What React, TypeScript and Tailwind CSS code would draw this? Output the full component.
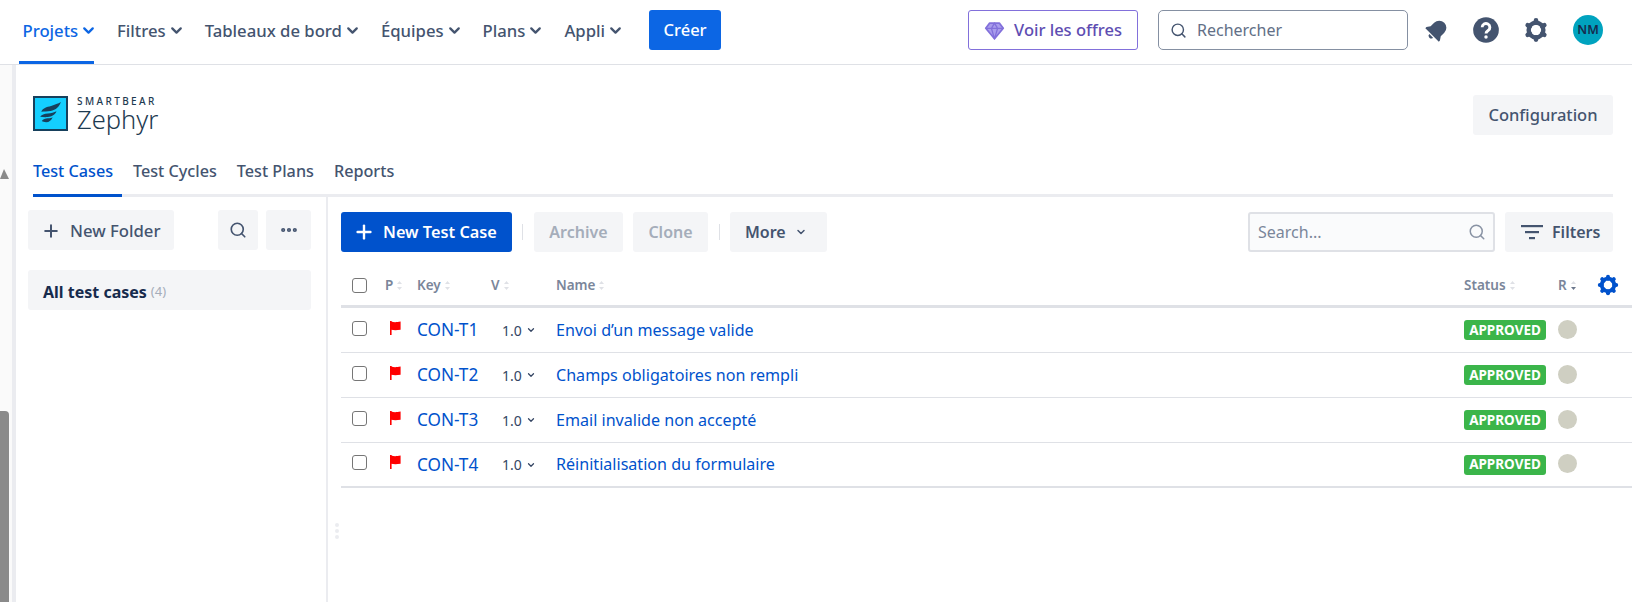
import { ChevronDown, Plus, Search, MoreHorizontal } from "lucide-react";

const FONT = "font-['Noto_Sans',sans-serif]";
const GRID = "grid grid-cols-[44px_32px_74px_65px_1fr_94px_74px] items-center";
const ROWS = [
  ["CON-T1", "Envoi d’un message valide"],
  ["CON-T2", "Champs obligatoires non rempli"],
  ["CON-T3", "Email invalide non accepté"],
  ["CON-T4", "Réinitialisation du formulaire"],
];

function NavItem({ label, active }: { label: string; active?: boolean }) {
  return (
    <div className={`flex h-full items-center text-[16.7px] font-medium border-b-[3px] ${active ? "w-[75px] border-b-[#0c66e4] pl-[3.5px] text-[#0c66e4]" : "ml-[20px] border-b-transparent text-[#44546f]"}`}>
      <span>{label}</span>
      <ChevronDown size={17} strokeWidth={3.2} className="ml-[2px] shrink-0" />
    </div>
  );
}

function Sort({ dark }: { dark?: boolean }) {
  return (
    <svg width="7" height="11" viewBox="0 0 7 11" className="ml-[3px]">
      <path d="M3.5 1 6 4H1z" fill="#dfe1e6" />
      <path d="M3.5 10 6 7H1z" fill={dark ? "#6b778c" : "#dfe1e6"} />
    </svg>
  );
}

function Head({ label, dark }: { label: string; dark?: boolean }) {
  return (
    <div className="flex items-center text-[13.5px] font-semibold text-[#7a869a]">
      <span>{label}</span>
      <Sort dark={dark} />
    </div>
  );
}

function Checkbox({ row }: { row?: boolean }) {
  return <div className={`ml-[11px] h-[15px] w-[15px] rounded-[3px] border-[1.5px] border-[#767676] bg-white ${row ? "mb-[4px]" : ""}`} />;
}

function Flag() {
  return (
    <svg width="12" height="15" viewBox="0 0 12 15" className="ml-[4px] mb-[4px]">
      <path d="M1 0h1.6v14H1z" fill="#ff0000" />
      <path d="M2 .6c3 .8 5 .8 9.6 0v8.2c-4 .6-6.6.6-9.6 0z" fill="#ff0000" />
    </svg>
  );
}

function Gear({ color, size, teeth = 6 }: { color: string; size: number; teeth?: number }) {
  const angles = Array.from({ length: teeth }, (_, i) => (i * 360) / teeth);
  return (
    <svg width={size} height={size} viewBox="0 0 24 24">
      {angles.map((a) => (
        <path key={a} d="M12 3.800v2" transform={`rotate(${a} 12 12)`} stroke={color} strokeWidth="4" strokeLinecap="round" />
      ))}
      <circle cx="12" cy="12" r="6.300" fill="none" stroke={color} strokeWidth="3.800" />
    </svg>
  );
}

function Nav() {
  return (
    <nav className="flex h-[65px] shrink-0 items-center border-b-[1.5px] border-[#dfe1e6] pl-[19px]">
      <div className="flex h-full items-center">
        <NavItem label="Projets" active />
        <div className="h-full pl-[3px]"><NavItem label="Filtres" /></div>
        <NavItem label="Tableaux de bord" />
        <NavItem label="Équipes" />
        <NavItem label="Plans" />
        <NavItem label="Appli" />
      </div>
      <button className="mb-[4px] ml-[25px] h-[40px] w-[72px] rounded-[3px] bg-[#0c66e4] text-[16.5px] font-medium text-white">Créer</button>
      <div className="mb-[4px] ml-auto flex items-center">
        <div className="flex h-[40px] w-[170px] items-center justify-center gap-[9px] rounded-[3px] border border-[#8270db] text-[16.5px] font-medium text-[#5e4db2]">
          <svg width="21" height="21" viewBox="0 0 24 24" fill="#a99cec" stroke="#8270db" strokeWidth="2" strokeLinejoin="round">
            <path d="M6.500 3.500h11L22 9.500 12 21.500 2 9.500z" />
            <path d="M2 9.500h20M8.500 9.500 12 21.500l3.500-12M8.500 9.500l3.500-6 3.500 6" strokeWidth="1.500" fill="none" />
          </svg>
          <span>Voir les offres</span>
        </div>
        <div className="ml-[20px] flex h-[40px] w-[250px] items-center gap-[10px] rounded-[5px] border border-[#8590a2] pl-[11px] text-[16px] text-[#626f86]">
          <Search size={17} strokeWidth={2} className="text-[#44546f]" />
          <span>Rechercher</span>
        </div>
        <div className="ml-[16px] flex w-[208px] items-center">
          <div className="flex w-[26px] justify-center">
            <svg width="26" height="26" viewBox="0 0 24 24" fill="#44546f">
              <g transform="rotate(45 12 12)">
                <path d="M12 2.500a6.600 6.600 0 0 0-6.600 6.600v4.600L3.200 17v1.400h17.600V17l-2.200-3.300V9.100A6.600 6.600 0 0 0 12 2.500z" />
                <path d="M9.600 19.600h4.800a2.400 2.400 0 0 1-4.800 0z" />
              </g>
            </svg>
          </div>
          <div className="ml-[22px] flex w-[28px] justify-center">
            <svg width="28" height="28" viewBox="0 0 24 24">
              <circle cx="12" cy="12" r="11" fill="#44546f" />
              <path d="M8.700 9.700a3.300 3.300 0 1 1 5.100 2.800c-1.200.8-1.800 1.300-1.800 2.500" fill="none" stroke="#fff" strokeWidth="2.500" />
              <circle cx="12" cy="18" r="1.500" fill="#fff" />
            </svg>
          </div>
          <div className="ml-[22px] flex w-[28px] justify-center"><Gear color="#44546f" size={28} /></div>
          <div className="ml-[23px] flex h-[30px] w-[30px] items-center justify-center rounded-full bg-[#00a3bf] text-[12.500px] font-semibold text-[#172b4d]">NM</div>
        </div>
      </div>
    </nav>
  );
}

function Logo() {
  return (
    <div className="flex items-center gap-[9px]">
      <div className="flex h-[35px] w-[35px] items-center justify-center border-2 border-[#17405c] bg-[#14cfff]">
        <svg width="25" height="25" viewBox="0 0 23 23" fill="#17405c">
          <path d="M3 10c1-3.500 5-4.500 9-5.500 3.500-1 6.500-2 9-3.500-1 4-4.500 7.500-9.500 8.300-3 .5-5.500.4-8.500.7z" />
          <path d="M2 14.500c1-2 4-2.700 7-3 3-.3 6-.8 8-2-1 3-4.500 5-8 5.300-2.800.2-5 0-7-.3z" />
          <path d="M3.500 18.500c1-1.800 3.500-2.500 5.500-2.600 2-.1 3.500-.4 4.500-1-1 2.700-3.200 4.600-6 4.600-1.800 0-3-.4-4-1z" />
        </svg>
      </div>
      <div className="flex flex-col text-[#1d3a50]">
        <span className="text-[10px] font-medium leading-[12px] tracking-[2.400px]">SMARTBEAR</span>
        <span className="text-[25.500px] font-light leading-[24px]">Zephyr</span>
      </div>
    </div>
  );
}

function Tabs() {
  const tabs = ["Test Cycles", "Test Plans", "Reports"];
  return (
    <div className="ml-[17px] mr-[19px] flex h-[62px] items-end gap-[20px] border-b-[3px] border-[#ebecf0] text-[16.2px] font-medium text-[#44546f]">
      <div className="-mb-[3px] flex h-[46px] w-[89px] items-center border-b-[3px] border-[#0052cc] pb-[2px] text-[#0052cc]">Test Cases</div>
      {tabs.map((t, i) => (
        <div key={t} className={`-mb-[3px] flex h-[46px] items-center border-b-[3px] border-transparent pb-[2px] ${i === 0 ? "-ml-[9px]" : ""}`}>{t}</div>
      ))}
    </div>
  );
}

function Sidebar() {
  return (
    <aside className="relative w-[312px] shrink-0 border-r-2 border-[#ebecf0] pl-[12px] pr-[15px] pt-[13px]">
      <div className="flex items-center">
        <button className="flex h-[40px] w-[146px] items-center gap-[9px] rounded-[3px] bg-[#f4f5f7] pl-[13px] pt-px text-[16.700px] font-medium text-[#44546f]">
          <Plus size={20} strokeWidth={2.400} />
          <span>New Folder</span>
        </button>
        <button className="ml-auto flex h-[40px] w-[40px] items-center justify-center rounded-[3px] bg-[#f4f5f7] text-[#44546f]">
          <Search size={18} strokeWidth={2.200} />
        </button>
        <button className="ml-[8px] flex h-[40px] w-[45px] items-center justify-center rounded-[3px] bg-[#f4f5f7] text-[#44546f]">
          <MoreHorizontal size={20} strokeWidth={3} />
        </button>
      </div>
      <div className="mt-[20px] flex h-[40px] items-center rounded-[3px] bg-[#f4f5f7] pl-[15px] pt-[3px] text-[16px] font-bold text-[#172b4d]">
        All test cases<span className="ml-[4px] text-[13px] font-normal text-[#a5adba]">(4)</span>
      </div>
      <div className="absolute right-[-13px] top-[326px] flex flex-col gap-[2px]">
        <span className="h-[4px] w-[4px] rounded-full bg-[#ebecf0]" />
        <span className="h-[4px] w-[4px] rounded-full bg-[#ebecf0]" />
        <span className="h-[4px] w-[4px] rounded-full bg-[#ebecf0]" />
      </div>
    </aside>
  );
}

function Toolbar() {
  return (
    <div className="flex h-[40px] items-center pr-[19px]">
      <button className="flex h-[40px] w-[171px] items-center gap-[8px] rounded-[3px] bg-[#0052cc] pl-[12px] text-[16.300px] font-semibold text-white">
        <Plus size={22} strokeWidth={2.600} />
        <span>New Test Case</span>
      </button>
      <span className="ml-[10px] h-[16px] w-px bg-[#dfe1e6]" />
      <button className="ml-[11px] h-[40px] w-[89px] rounded-[3px] bg-[#f4f5f7] text-[16px] font-semibold text-[#a5adba]">Archive</button>
      <button className="ml-[10px] h-[40px] w-[75px] rounded-[3px] bg-[#f4f5f7] text-[16px] font-semibold text-[#a5adba]">Clone</button>
      <span className="ml-[11px] h-[16px] w-px bg-[#dfe1e6]" />
      <button className="ml-[10px] flex h-[40px] w-[97px] items-center gap-[9px] rounded-[3px] bg-[#f4f5f7] pl-[15px] text-[16px] font-semibold text-[#44546f]">
        <span>More</span>
        <ChevronDown size={12} strokeWidth={3} />
      </button>
      <div className="ml-auto flex h-[40px] w-[247px] items-center rounded-[3px] border-2 border-[#dfe1e6] bg-[#fafbfc] pl-[8px] pr-[7px] text-[16px] text-[#7a869a]">
        <span>Search...</span>
        <Search size={18} strokeWidth={2} className="ml-auto text-[#8993a4]" />
      </div>
      <button className="ml-[10px] flex h-[40px] w-[108px] items-center gap-[9px] rounded-[3px] bg-[#f4f5f7] pl-[16px] text-[16px] font-semibold text-[#44546f]">
        <svg width="22" height="16" viewBox="0 0 22 16" fill="#44546f">
          <rect x="0" y="1" width="22" height="2.200" />
          <rect x="4" y="7" width="14" height="2.200" />
          <rect x="8" y="13" width="6" height="2.200" />
        </svg>
        <span>Filters</span>
      </button>
    </div>
  );
}

function Table() {
  return (
    <div>
      <div className={`${GRID} h-[56px] border-b-[3px] border-[#dfe1e6] pt-[13px]`}>
        <Checkbox />
        <Head label="P" />
        <Head label="Key" />
        <Head label="V" />
        <Head label="Name" />
        <Head label="Status" />
        <div className="flex items-center">
          <Head label="R" dark />
          <span className="ml-[19px]"><Gear color="#0052cc" size={24} teeth={8} /></span>
        </div>
      </div>
      {ROWS.map(([k, n], i) => (
        <div key={k} className={`${GRID} h-[45px] ${i === 3 ? "border-b-2" : "border-b"} border-[#dfe1e6]`}>
          <Checkbox row />
          <Flag />
          <a className="text-[17.200px] text-[#0052cc]">{k}</a>
          <div className="flex items-center gap-[4px] pl-[11px] text-[14px] text-[#344563]">
            <span>1.0</span>
            <ChevronDown size={10} strokeWidth={3} />
          </div>
          <a className="text-[16.100px] text-[#0052cc]">{n}</a>
          <span className="flex h-[20px] w-[82px] items-center justify-center rounded-[3px] bg-[#3bb54a] text-[13.500px] font-bold text-white">APPROVED</span>
          <span className="mb-[2px] h-[19px] w-[19px] rounded-full bg-[#cfcfc2]" />
        </div>
      ))}
    </div>
  );
}

export default function App() {
  return (
    <div className={`${FONT} flex h-[602px] w-[1632px] flex-col overflow-hidden bg-white`}>
      <Nav />
      <div className="flex min-h-0 flex-1">
        <div className="relative w-[12px] shrink-0 bg-[#fafafa]">
          <svg width="9" height="10" viewBox="0 0 9 10" className="absolute left-0 top-[104px]">
            <path d="M4 0 9 10H0z" fill="#8a8a8a" />
          </svg>
          <div className="absolute bottom-0 left-0 top-[346px] w-[9px] rounded-tr-[4px] bg-[#8a8a8a]" />
        </div>
        <div className="w-[4px] shrink-0 bg-[#ebecf0]" />
        <div className="flex min-w-0 flex-1 flex-col">
          <div className="flex items-start justify-between pl-[17px] pr-[19px] pt-[30px]">
            <Logo />
            <button className="h-[40px] w-[140px] rounded-[3px] bg-[#f4f5f7] text-[16.500px] font-medium text-[#44546f]">Configuration</button>
          </div>
          <Tabs />
          <div className="flex min-h-0 flex-1">
            <Sidebar />
            <div className="min-w-0 flex-1 pl-[13px] pt-[15px]">
              <Toolbar />
              <Table />
            </div>
          </div>
        </div>
      </div>
    </div>
  );
}
